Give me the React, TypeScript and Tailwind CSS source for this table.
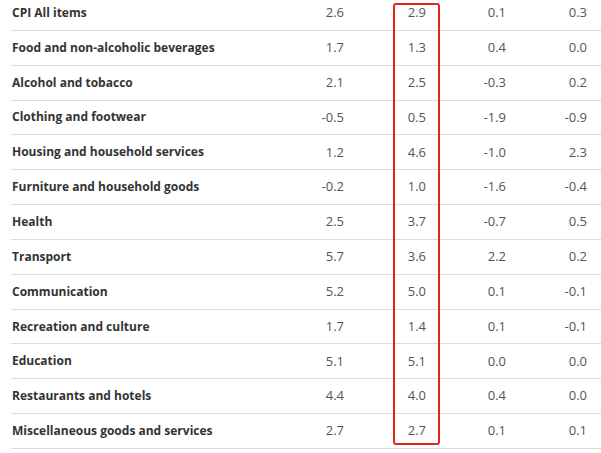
const rows: [string, string, string, string, string][] = [
  ["CPI All items", "2.6", "2.9", "0.1", "0.3"],
  ["Food and non-alcoholic beverages", "1.7", "1.3", "0.4", "0.0"],
  ["Alcohol and tobacco", "2.1", "2.5", "-0.3", "0.2"],
  ["Clothing and footwear", "-0.5", "0.5", "-1.9", "-0.9"],
  ["Housing and household services", "1.2", "4.6", "-1.0", "2.3"],
  ["Furniture and household goods", "-0.2", "1.0", "-1.6", "-0.4"],
  ["Health", "2.5", "3.7", "-0.7", "0.5"],
  ["Transport", "5.7", "3.6", "2.2", "0.2"],
  ["Communication", "5.2", "5.0", "0.1", "-0.1"],
  ["Recreation and culture", "1.7", "1.4", "0.1", "-0.1"],
  ["Education", "5.1", "5.1", "0.0", "0.0"],
  ["Restaurants and hotels", "4.4", "4.0", "0.4", "0.0"],
  ["Miscellaneous goods and services", "2.7", "2.7", "0.1", "0.1"],
];

export default function App() {
  return (
    <div className="relative w-[601px] h-[453px] overflow-hidden bg-white font-['Open_Sans',sans-serif] text-[13px]">
      <div className="-mt-[4px] pl-[11px]">
        {rows.map(([label, a, b, c, d]) => (
          <div
            key={label}
            className="grid grid-cols-[1fr_82px_82px_80px_95px] h-[34.85px] items-center border-b border-[#dcdcdc]"
          >
            <div className="pl-px text-[12px] font-bold text-[#333] whitespace-nowrap">{label}</div>
            <div className="text-right text-[#555]">{a}</div>
            <div className="text-right text-[#555]">{b}</div>
            <div className="text-right text-[#555]">{c}</div>
            <div className="text-right pr-[14px] text-[#555]">{d}</div>
          </div>
        ))}
      </div>
      <div className="absolute left-[393px] top-[3px] w-[47px] h-[442px] border-2 border-[#e3241d] rounded-[3px]" />
    </div>
  );
}
